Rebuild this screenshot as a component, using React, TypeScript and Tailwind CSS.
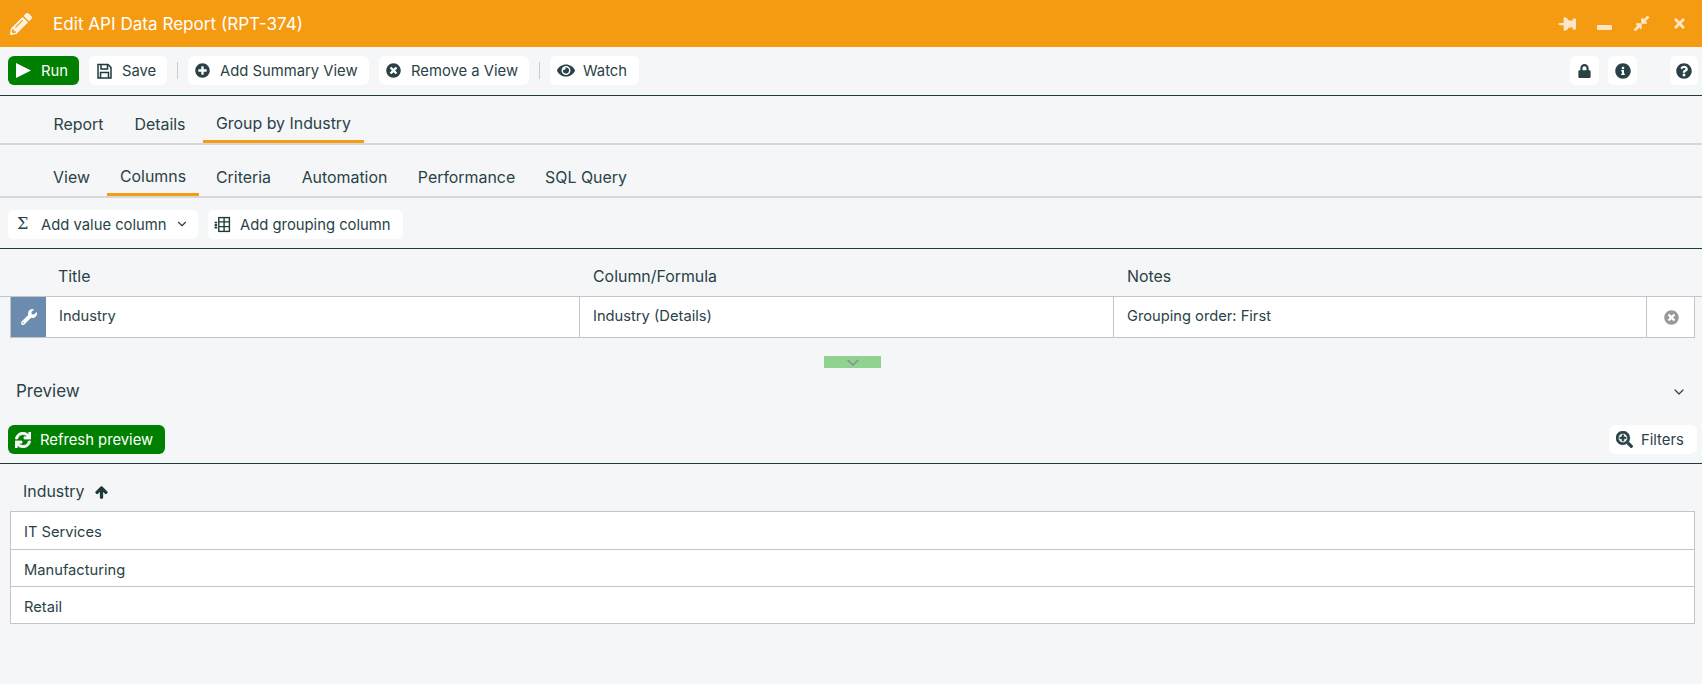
import React from "react";
import { ChevronDown } from "lucide-react";
import {
  FaThumbtack, FaCompressAlt, FaTimes, FaPlusCircle, FaTimesCircle, FaEye, FaLock, FaInfoCircle, FaQuestionCircle,
  FaWrench, FaSync, FaSearchPlus, FaPencilAlt, FaArrowUp,
} from "react-icons/fa";

function Btn({ icon, label, green, className = "", children }: { icon?: React.ReactNode; label?: string; green?: boolean; className?: string; children?: React.ReactNode }) {
  return (
    <div className={`h-[29px] flex items-center rounded-[6px] text-[14.8px] ${green ? "bg-[#008000] text-white" : "bg-white text-[#2a4247]"} ${className}`}>
      {icon}
      {label && <span className="whitespace-nowrap pt-[2px]">{label}</span>}
      {children}
    </div>
  );
}

function Sep() {
  return <div className="w-px h-[17px] bg-[#c8cacc] mx-[10px]" />;
}

function PlayIcon() {
  return (
    <svg width="15" height="15" viewBox="0 0 15 15" fill="#ffffff" className="mr-[10px] ml-[1px] shrink-0">
      <polygon points="0,0 15,7.5 0,15" />
    </svg>
  );
}

function SaveIcon() {
  return (
    <svg width="15" height="16" viewBox="0 0 15 16" fill="none" stroke="#1e3a3a" strokeWidth="1.5" className="mr-[10px] shrink-0">
      <path d="M1 1.5h10l3 3v10.500H1z" />
      <path d="M4 1.500v4.500h6.500v-4.500" />
      <path d="M3.500 15v-5.500h8V15" />
    </svg>
  );
}

function GroupingIcon() {
  return (
    <svg width="17" height="17" viewBox="0 0 16 16" fill="none" stroke="#1e3a3a" strokeWidth="1.3" className="mr-[9px] shrink-0">
      <rect x="4.5" y="1.5" width="10" height="13" />
      <path d="M4.5 5.5h10M4.5 10h10M9.5 1.5v13" />
      <path d="M0.5 6h2.5M0.5 8.5h2.5M0.5 11h2.5M1.8 7v3" />
    </svg>
  );
}

function Tab({ label, active, className = "" }: { label: string; active?: boolean; className?: string }) {
  return (
    <div className={`h-full flex items-center justify-center whitespace-nowrap ${active ? "border-b-[3px] border-[#f59c11] -mb-[2px]" : ""} ${className}`}>
      {label}
    </div>
  );
}

export default function App() {
  return (
    <div className="w-[1702px] h-[684px] bg-[#f5f6f8] text-[#2a4247] flex flex-col overflow-hidden font-['Inter',sans-serif]">
      <header className="h-[47px] bg-[#f49b12] flex items-center shrink-0">
        <FaPencilAlt className="text-[#fdf3e2] ml-[10px] w-[22px] h-[22px]" />
        <span className="ml-[21px] text-white text-[17.1px]">Edit API Data Report (RPT-374)</span>
        <div className="ml-auto flex items-center text-[#fde6c8]">
          <FaThumbtack className="w-[18px] h-[18px] rotate-90 mr-[21px]" />
          <div className="w-[15px] h-[5px] rounded-[1px] bg-[#fde6c8] mt-[7px] mr-[21px]" />
          <FaCompressAlt className="w-[17px] h-[17px] mr-[22px]" strokeWidth={20} />
          <FaTimes className="w-[15px] h-[15px] mr-[15px]" />
        </div>
      </header>

      <div className="h-[49px] border-b border-[#1e3a3a] flex items-center shrink-0 pl-[8px] pb-px">
        <Btn green icon={<PlayIcon />} label="Run" className="w-[71px] pl-[7px]" />
        <Btn icon={<SaveIcon />} label="Save" className="w-[78px] pl-[8px] ml-[10px]" />
        <Sep />
        <Btn icon={<FaPlusCircle className="w-[15px] h-[15px] mr-[10px]" />} label="Add Summary View" className="w-[181px] pl-[7px]" />
        <Btn icon={<FaTimesCircle className="w-[15px] h-[15px] mr-[10px]" />} label="Remove a View" className="w-[150px] pl-[7px] ml-[10px]" />
        <Sep />
        <Btn icon={<FaEye className="w-[18px] h-[17px] mr-[8px]" />} label="Watch" className="w-[89px] pl-[7px]" />
        <div className="ml-auto flex items-center pr-[4px]">
          <Btn icon={<FaLock className="w-[13px] h-[14px]" />} className="w-[29px] justify-center" />
          <Btn icon={<FaInfoCircle className="w-[16px] h-[16px]" />} className="w-[29px] justify-center ml-[9px]" />
          <Btn icon={<FaQuestionCircle className="w-[16px] h-[16px]" />} className="w-[28px] justify-center ml-[33px]" />
        </div>
      </div>

      <nav className="h-[49px] border-b-2 border-[#d5d7da] flex items-end pl-[41px] text-[15.9px] shrink-0">
        <div className="flex h-[36px] items-stretch">
          <Tab label="Report" className="w-[75px]" />
          <Tab label="Details" className="w-[76px] ml-[6px]" />
          <Tab label="Group by Industry" active className="w-[161px] ml-[5px]" />
        </div>
      </nav>

      <nav className="h-[53px] border-b-2 border-[#d5d7da] flex items-end pl-[41px] text-[15.9px] shrink-0">
        <div className="flex h-[36px] items-stretch">
          <Tab label="View" className="w-[61px]" />
          <Tab label="Columns" active className="w-[92px] ml-[5px]" />
          <Tab label="Criteria" className="w-[79px] ml-[5px]" />
          <Tab label="Automation" className="w-[113px] ml-[5px]" />
          <Tab label="Performance" className="w-[121px] ml-[5px]" />
          <Tab label="SQL Query" className="w-[104px] ml-[7px]" />
        </div>
      </nav>

      <div className="h-[51px] border-b border-[#1e3a3a] flex items-center shrink-0 pl-[8px] pt-[2px] gap-[10px]">
        <Btn
          icon={<span className="w-[11px] mr-[13px] text-[16px] leading-none font-['DejaVu_Serif',serif]">Σ</span>}
          className="w-[190px] pl-[9px]"
          label="Add value column"
        >
          <ChevronDown className="w-[14px] h-[14px] ml-[8px]" strokeWidth={2} />
        </Btn>
        <Btn icon={<GroupingIcon />} label="Add grouping column" className="w-[195px] pl-[6px]" />
      </div>

      <div className="h-[48px] border-b border-[#c3c5c8] flex items-center shrink-0 text-[15.9px] pt-[9px]">
        <div className="w-[58px] shrink-0" />
        <div className="w-[535px] shrink-0">Title</div>
        <div className="w-[534px] shrink-0">Column/Formula</div>
        <div>Notes</div>
      </div>

      <div className="h-[41px] mx-[10px] w-[1685px] bg-white border-b border-r border-[#c3c5c8] flex items-stretch text-[14.7px] shrink-0">
        <div className="w-[36px] bg-[#6b8cae] border-l border-[#c3c5c8] flex items-center justify-center text-white shrink-0">
          <FaWrench className="w-[16px] h-[16px]" />
        </div>
        <div className="w-[534px] pl-[13px] pb-[1px] flex items-center border-r border-[#c3c5c8] shrink-0">Industry</div>
        <div className="w-[534px] pl-[13px] pb-[1px] flex items-center border-r border-[#c3c5c8] shrink-0">Industry (Details)</div>
        <div className="w-[533px] pl-[13px] pb-[1px] flex items-center border-r border-[#c3c5c8] shrink-0">Grouping order: First</div>
        <div className="flex-1 flex items-center justify-center text-[#999999] pl-[2px]">
          <FaTimesCircle className="w-[15px] h-[15px]" />
        </div>
      </div>

      <div className="h-[12px] mt-[18px] ml-[824px] w-[57px] bg-[#90d290] flex items-center justify-center shrink-0">
        <svg width="12" height="7" viewBox="0 0 12 7" fill="none" stroke="#8f8f95" strokeWidth="1.6"><path d="M0.6 0.8 6 6 11.400 0.8" /></svg>
      </div>

      <div className="h-[24px] mt-[12px] flex items-center justify-between shrink-0 pl-[16px] pr-[15px]">
        <span className="text-[17px]">Preview</span>
        <ChevronDown className="w-[16px] h-[16px]" strokeWidth={1.8} />
      </div>

      <div className="h-[29px] mt-[21px] flex items-center justify-between shrink-0 pl-[8px] pr-[5px]">
        <Btn green icon={<FaSync className="w-[16px] h-[16px] mr-[9px]" strokeWidth={25} />} label="Refresh preview" className="w-[157px] pl-[7px]" />
        <Btn icon={<FaSearchPlus className="w-[17px] h-[17px] mr-[8px]" strokeWidth={15} />} label="Filters" className="w-[88px] pl-[7px]" />
      </div>

      <div className="h-px bg-[#1e3a3a] mt-[9px] shrink-0" />

      <div className="h-[47px] flex items-center gap-[10px] pl-[23px] text-[15.9px] shrink-0 pt-[9px]">
        <span>Industry</span>
        <FaArrowUp className="w-[13px] h-[13px] text-[#1e3a3a]" strokeWidth={50} />
      </div>

      <div className="ml-[10px] w-[1685px] bg-white border border-[#c3c5c8] text-[14.7px] shrink-0">
        <div className="h-[38px] pl-[13px] pt-[4px] flex items-center border-b border-[#c3c5c8]">IT Services</div>
        <div className="h-[37px] pl-[13px] pt-[4px] flex items-center border-b border-[#c3c5c8]">Manufacturing</div>
        <div className="h-[36px] pl-[13px] pt-[4px] flex items-center">Retail</div>
      </div>
    </div>
  );
}
